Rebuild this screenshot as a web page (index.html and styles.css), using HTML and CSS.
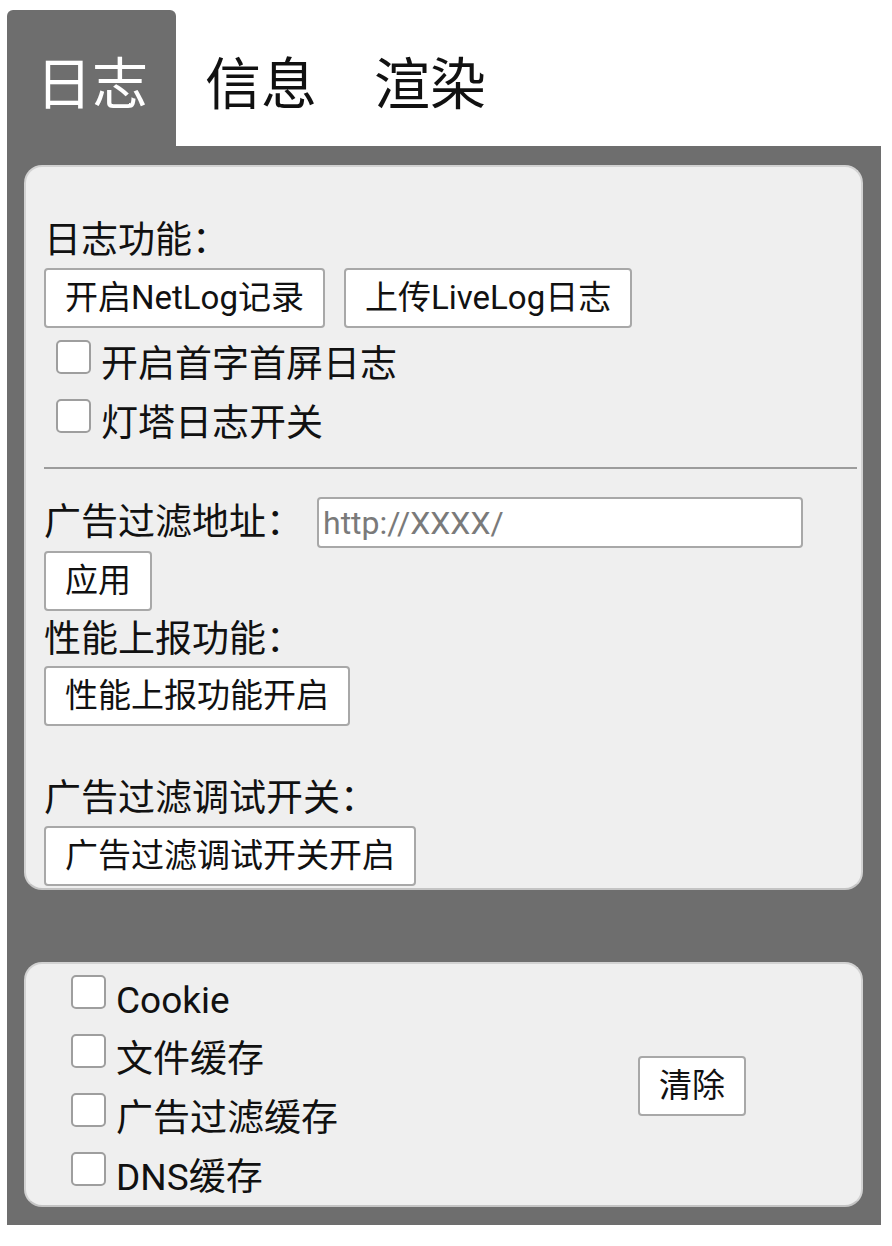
FILE: index.html
```html
<!DOCTYPE html>
<html lang="zh-CN">
<head>
<meta charset="utf-8">
<title>日志</title>
<link rel="stylesheet" href="styles.css">
</head>
<body>
<div class="app">
  <nav class="tabs">
    <div class="tab active">日志</div>
    <div class="tab">信息</div>
    <div class="tab">渲染</div>
  </nav>
  <main class="tab-body">
    <section class="panel panel-log">
      <div class="label first">日志功能：</div>
      <div class="btn-row">
        <button class="btn">开启NetLog记录</button>
        <button class="btn">上传LiveLog日志</button>
      </div>
      <label class="check check-log first-check"><input type="checkbox" class="box"><span class="check-text">开启首字首屏日志</span></label>
      <label class="check check-log"><input type="checkbox" class="box"><span class="check-text">灯塔日志开关</span></label>
      <hr class="divider">
      <div class="field-row">
        <span class="label">广告过滤地址：</span>
        <input class="text-input" type="text" placeholder="http://XXXX/">
      </div>
      <div class="btn-row apply-row"><button class="btn">应用</button></div>
      <div class="label perf-label">性能上报功能：</div>
      <div class="btn-row perf-row"><button class="btn">性能上报功能开启</button></div>
      <div class="label debug-label">广告过滤调试开关：</div>
      <div class="btn-row debug-row"><button class="btn">广告过滤调试开关开启</button></div>
    </section>
    <section class="panel panel-cache">
      <div class="cache-list">
        <label class="check"><input type="checkbox" class="box"><span class="check-text">Cookie</span></label>
        <label class="check"><input type="checkbox" class="box"><span class="check-text">文件缓存</span></label>
        <label class="check"><input type="checkbox" class="box"><span class="check-text">广告过滤缓存</span></label>
        <label class="check"><input type="checkbox" class="box"><span class="check-text">DNS缓存</span></label>
      </div>
      <button class="btn btn-clear">清除</button>
    </section>
  </main>
</div>
</body>
</html>
```
FILE: styles.css
```css
* { box-sizing: border-box; }

html, body {
  margin: 0;
  padding: 0;
  background: #ffffff;
}

body {
  font-family: Roboto, "Noto Sans CJK SC", sans-serif;
  color: #111111;
}

.app {
  width: 874px;
  margin: 10px 0 0 7px;
}

.tabs {
  display: flex;
  height: 136px;
}

.tab {
  font-size: 56px;
  line-height: 122px;
  padding: 14px 28px 0 29px;
  color: #111111;
}

.tab.active {
  background: #6e6e6e;
  color: #ffffff;
  border-radius: 6px 6px 0 0;
}

.tab-body {
  background: #6e6e6e;
  padding: 19px 18px 18px 17px;
}

.panel {
  background: #efefef;
  border: 2px solid #d2d2d2;
  border-bottom-color: #c4c4c4;
  border-radius: 18px;
}

.panel-log {
  padding: 52px 4px 2px 18px;
}

.label {
  font-size: 37px;
  line-height: 44px;
  white-space: nowrap;
}

.btn-row {
  display: flex;
  gap: 19px;
  margin-top: 5px;
}

.btn {
  font-family: Roboto, "Noto Sans CJK SC", sans-serif;
  font-size: 33px;
  line-height: 56px;
  height: 60px;
  padding: 0 19px;
  background: #ffffff;
  color: #111111;
  border: 2px solid #a8a8a8;
  border-radius: 4px;
  white-space: nowrap;
}

.check {
  display: flex;
  align-items: flex-start;
  font-size: 37px;
  line-height: 58px;
  height: 59px;
}

.check-text {
  margin-top: 4px;
}

.box {
  appearance: none;
  -webkit-appearance: none;
  width: 35px;
  height: 34px;
  margin: 7px 10px 0 0;
  background: #ffffff;
  border: 2px solid #9e9e9e;
  border-radius: 5px;
  flex: none;
}

.check-log .box {
  margin-left: 12px;
  margin-top: 8px;
}

.first-check {
  margin-top: 4px;
}

.divider {
  margin: 17px 0 0 0;
  border: 0;
  height: 2px;
  background: #9c9c9c;
}

.field-row {
  display: flex;
  align-items: center;
  gap: 14px;
  margin-top: 28px;
  height: 51px;
}

.text-input {
  width: 486px;
  height: 51px;
  padding: 0 4px;
  font-family: Roboto, "Noto Sans CJK SC", sans-serif;
  font-size: 32px;
  background: #ffffff;
  border: 2px solid #a8a8a8;
  border-radius: 4px;
  color: #333333;
}

.text-input::placeholder {
  color: #7a7a7a;
}

.apply-row { margin-top: 3px; }

.perf-label { margin-top: 7px; }

.perf-row { margin-top: 4px; }

.debug-label { margin-top: 51px; }

.debug-row { margin-top: 5px; }

.panel-cache {
  margin-top: 72px;
  padding: 4px 115px 1px 45px;
  display: flex;
  justify-content: space-between;
  align-items: center;
}

.cache-list {
  display: flex;
  flex-direction: column;
}
```
